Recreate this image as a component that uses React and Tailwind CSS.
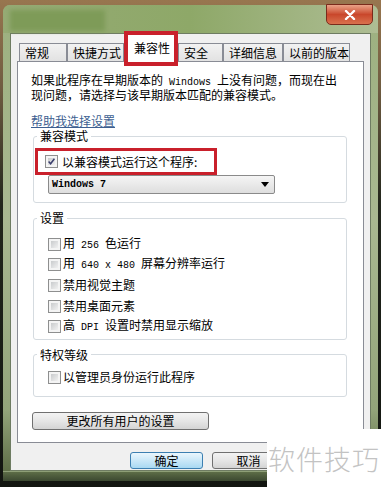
import React from 'react'

const ui = { fontFamily: '"Noto Sans CJK SC", "Liberation Sans", sans-serif' }

function Mono({ children }) {
  return (
    <span className="whitespace-pre text-[10px]" style={{ fontFamily: '"Liberation Mono", monospace' }}>
      {children}
    </span>
  )
}

function CheckBox({ checked }) {
  return (
    <div className="w-[13px] h-[13px] shrink-0 border border-[#8e8f8f] bg-[#f4f4f4] p-[2px]">
      <div className="relative w-full h-full bg-gradient-to-br from-[#c9cbcd] to-[#f1f1f1]">
        {checked && (
          <svg viewBox="0 0 7 7" className="absolute inset-0 w-full h-full">
            <path d="M0.6 3.6 L2.6 5.8 L6.4 0.8" fill="none" stroke="#3b3f6e" strokeWidth="1.5" />
          </svg>
        )}
      </div>
    </div>
  )
}

function Row({ checked, children }) {
  return (
    <div className="flex items-center gap-[2px] h-[20.6px] pl-[14px]">
      <CheckBox checked={checked} />
      <span className="leading-[12px]">{children}</span>
    </div>
  )
}

function Group({ label, className, children }) {
  return (
    <fieldset className={`ml-[1px] mr-[2px] border border-[#d5dbe0] rounded-[3px] ${className}`}>
      <legend className="ml-[3px] px-[3px] leading-[12px]">{label}</legend>
      {children}
    </fieldset>
  )
}

function Button({ primary, className, children }) {
  return (
    <div
      className={`flex items-center justify-center rounded-[3px] border leading-[12px] ${
        primary
          ? 'border-[#3c7fb1] bg-gradient-to-b from-[#eaf6fd] to-[#a9d9f2]'
          : 'border-[#707070] bg-gradient-to-b from-[#f3f3f3] via-[#e6e6e6] to-[#d4d4d4]'
      } ${className}`}
    >
      {children}
    </div>
  )
}

const tabs = [
  { label: '常规', w: 'w-[48px]' },
  { label: '快捷方式', w: 'w-[57px]' },
  { label: '兼容性', w: 'w-[54px]', active: true },
  { label: '安全', w: 'w-[45px]' },
  { label: '详细信息', w: 'w-[60px]' },
  { label: '以前的版本', w: 'w-[67px]' },
]

export default function App() {
  return (
    <div
      className="relative w-[381px] h-[487px] overflow-hidden pt-[5px] px-[3px] text-[12px] text-black bg-[linear-gradient(to_bottom,#98764f_0%,#6f5c41_18%,#22261c_42%,#121510_100%)]"
      style={ui}
    >
      <div className="flex flex-col w-[375px] h-[476px] rounded-t-[7px] bg-[linear-gradient(to_bottom,#9cb07f_0%,#a9b891_45%,#93a47a_85%,#56663f_100%)]">
        {/* title bar */}
        <div className="flex justify-between items-start h-[28px] rounded-t-[7px] bg-gradient-to-r from-[#95aa74] via-[#8ea868] to-[#aebd94]">
          <div className="mt-[5px] ml-[7px] w-[95px] h-[21px] bg-[#7e9b58] blur-[2px]" />
          <div className="-mt-[1px] mr-[5px] w-[47px] h-[21px] flex items-center justify-center rounded-b-[5px] border border-[#7a2b1c] bg-gradient-to-b from-[#e9a288] via-[#c9472b] to-[#d9714e]">
            <svg viewBox="0 0 12 10" className="w-[12px] h-[10px]">
              <path d="M2 1 L10 9 M10 1 L2 9" stroke="#fff" strokeWidth="2.4" strokeLinecap="round" />
            </svg>
          </div>
        </div>

        {/* body */}
        <div className="mx-[7px] h-[438px] border border-[#6e7c62] bg-[#f0f0f0] px-[6px] pt-[9px]">
          <div className="flex items-end h-[18px] pl-[2px]">
            {tabs.map((t) =>
              t.active ? (
                <div
                  key={t.label}
                  className={`relative z-10 -mb-[5px] h-[35px] ${t.w} shrink-0 whitespace-nowrap border-[4px] border-[#c9202b] bg-white pl-[6px] pt-[7px] leading-[12px]`}
                >
                  {t.label}
                </div>
              ) : (
                <div
                  key={t.label}
                  className={`h-[18px] ${t.w} shrink-0 whitespace-nowrap border border-b-0 border-[#898c95] bg-gradient-to-b from-[#f2f2f2] to-[#e2e2e2] pl-[5px] flex items-center leading-[12px]`}
                >
                  {t.label}
                </div>
              )
            )}
          </div>

          <div className="h-[382px] border border-[#898c95] bg-white px-[14px] pt-[12px]">
            <p className="leading-[12px] -ml-[1px]">
              如果此程序在早期版本的<Mono> Windows </Mono>上没有问题，而现在出
              <br />
              现问题，请选择与该早期版本匹配的兼容模式。
            </p>
            <div className="mt-[14px] -ml-[1px] leading-[12px] text-[#3d5f91] underline underline-offset-1">帮助我选择设置</div>

            <Group label="兼容模式" className="mt-[3px] pb-[8px]">
              <div className="mt-[6px] ml-[1px] w-[182px] h-[27px] border-[3px] border-[#c9202b] flex items-center gap-[4px] pl-[7px]">
                <CheckBox checked />
                <span className="leading-[12px]">以兼容模式运行这个程序:</span>
              </div>
              <div className="ml-[14px] w-[227px] h-[19px] flex items-center justify-between px-[3px] rounded-[2px] border border-[#8a8a8a] bg-gradient-to-b from-[#f5f5f5] to-[#dedede]">
                <span className="text-[10px] font-bold" style={{ fontFamily: '"Liberation Mono", monospace' }}>
                  Windows 7
                </span>
                <svg viewBox="0 0 8 5" className="w-[8px] h-[5px] mr-[2px]">
                  <path d="M0 0 H8 L4 5 Z" fill="#000" />
                </svg>
              </div>
            </Group>

            <Group label="设置" className="mt-[9px] pt-[10px] pb-[2px]">
              <Row>用<Mono> 256 </Mono>色运行</Row>
              <Row>用<Mono> 640 x 480 </Mono>屏幕分辨率运行</Row>
              <Row>禁用视觉主题</Row>
              <Row>禁用桌面元素</Row>
              <Row>高<Mono> DPI </Mono>设置时禁用显示缩放</Row>
            </Group>

            <Group label="特权等级" className="mt-[9px] pt-[6px] pb-[8px]">
              <Row>以管理员身份运行此程序</Row>
            </Group>

            <Button className="mt-[15px] w-[177px] h-[18px]">更改所有用户的设置</Button>
          </div>

          <div className="flex mt-[9px] pl-[113px] gap-[9px]">
            <Button primary className="w-[73px] h-[17px]">确定</Button>
            <Button className="w-[73px] h-[17px]">取消</Button>
          </div>
        </div>

        <div className="flex-1 border-t border-[#8e9f77] bg-gradient-to-b from-[#5d6d47] to-[#3b4830]" />
      </div>

      <div className="absolute left-[267px] top-[429px] w-[114px] h-[58px] bg-white flex items-center justify-center">
        <span className="text-[27px] font-light text-[#c3c3c3] tracking-[1px] leading-none">软件技巧</span>
      </div>
    </div>
  )
}
